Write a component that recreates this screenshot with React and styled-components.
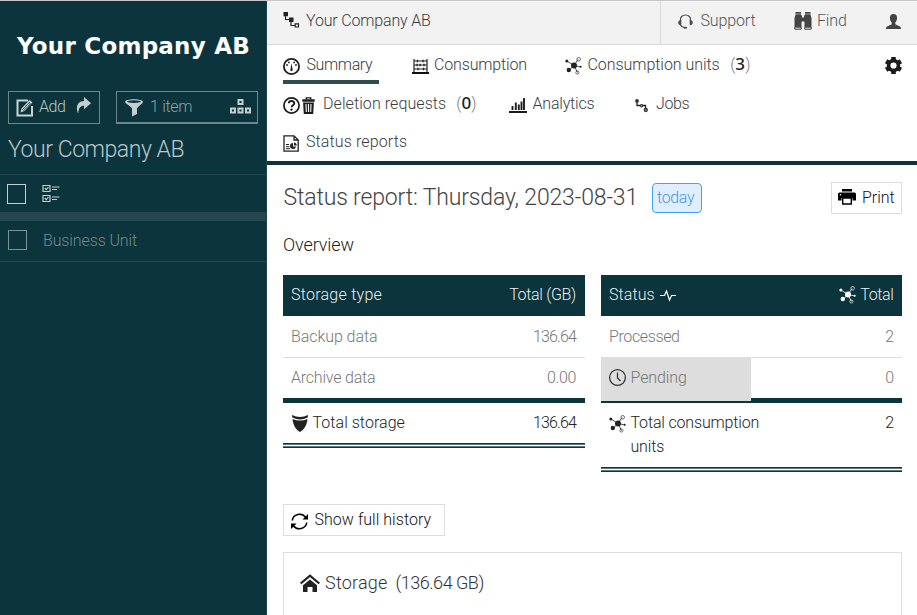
import React from 'react';
import styled, { createGlobalStyle } from 'styled-components';

const deep = '#0c343d';
const rule = '#dddddd';

const Global = createGlobalStyle`
  * { box-sizing: border-box; }
  body { margin: 0; overflow: hidden; background: #fff; font: 300 16px/24px Roboto, "Liberation Sans", sans-serif; color: #222; }
`;

const Page = styled.div`
  display: grid; grid-template-columns: 267px 1fr; height: 615px; width: 917px;
  border-top: 1px solid #c6c6c6; overflow: hidden;
`;

/* Single-line text with its own size, tracking and side margins */
const Text = styled.span`
  display: block; white-space: nowrap;
  font-size: ${p => p.$size || 16}px;
  font-weight: 300;
  letter-spacing: ${p => p.$track || 0}px;
  color: ${p => p.$color || 'inherit'};
  margin: 0 ${p => p.$right || 0}px 0 ${p => p.$left || 0}px;
`;

const Svg = styled.svg`
  display: block; flex: none; overflow: visible;
  margin-top: ${p => p.$top || 0}px;
  margin-left: ${p => p.$left || 0}px;
`;

/* Sidebar */
const Sidebar = styled.aside`background: ${deep}; color: #b9c7ca; border-right: 1px solid #1d434b;`;
const Logo = styled.div`
  padding: 30px 0 0 17px; height: 90px; color: #fff; white-space: nowrap;
  font: 700 23px/30px "DejaVu Sans", sans-serif; letter-spacing: 0.24px;
`;
const Tools = styled.div`display: flex; gap: 16px; padding-left: 8px;`;
const ToolButton = styled.div`
  display: flex; align-items: flex-start; height: 33px; width: ${p => p.$width}px;
  padding: 3px 0 0 7px; border: 1px solid #6d868b; border-bottom-width: ${p => p.$base || 1}px;
`;
const SideTitle = styled.div`height: 50px; padding: 12px 0 0 8px; line-height: 28px;`;
const SideHead = styled.div`
  display: flex; height: 47px; border-top: 1px solid #23454d; border-bottom: 9px solid #24474f;
  padding: 9px 0 0 7px;
`;
const SideRow = styled.div`
  display: flex; height: 41px; border-bottom: 1px solid #23454d; padding: 8px 0 0 8px; color: #6f8b90;
`;
const Check = styled.span`
  width: 19px; height: 20px; border: 1px solid ${p => p.$color}; margin: ${p => p.$top || 0}px ${p => p.$gap}px 0 0;
`;

/* Main column */
const Main = styled.main`min-width: 0;`;
const TopBar = styled.header`
  display: flex; height: 44px; background: #f2f2f2; border-bottom: 1px solid #d9d9d9;
`;
const Crumb = styled.div`display: flex; width: 393px; padding: 8px 0 0 16px; color: #3c3c3c;`;
const TopActions = styled.div`
  display: flex; flex: 1; border-left: 1px solid #d9d9d9; padding: 8px 0 0 17px; color: #555;
`;
const TopAction = styled.div`display: flex; width: ${p => p.$width}px;`;
const Nav = styled.nav`height: 120px; border-bottom: 4px solid ${deep}; padding: 8px 0 0 16px; color: #3c3c3c;`;
const NavRow = styled.div`display: flex; height: ${p => p.$height}px;`;
const NavItem = styled.div`
  display: flex; height: 31px; width: ${p => p.$width}px; margin-right: ${p => p.$gap || 0}px;
  border-bottom: 4px solid ${p => (p.$active ? '#2f4f4f' : 'transparent')};
`;
const Count = styled.span`
  display: flex; color: #777; margin-left: ${p => p.$left}px;
  b { font: 500 17px/22px "Noto Sans", sans-serif; color: #222; width: 10px; text-align: center; margin-left: -1px; }
  i { font-style: normal; width: 6px; }
`;

const Body = styled.section`padding: 17px 15px 0 16px;`;
const Heading = styled.div`display: flex; height: 32px; color: #444;`;
const Today = styled.span`
  width: 50px; height: 30px; margin: 1px 0 0 auto; padding: 2px 0 0 4px; line-height: 24px;
  border: 1px solid #42a1f7; border-radius: 4px; background: #e0efff; color: #4f96db;
`;
const TitleGroup = styled.div`display: flex; width: 419px; line-height: 32px;`;
const BoxButton = styled.div`
  display: flex; width: ${p => p.$width}px; height: 32px; border: 1px solid ${rule}; padding: 3px 0 0 6px;
  color: #111; margin-left: ${p => (p.$end ? 'auto' : 0)};
`;
const Overview = styled.div`margin-top: 18px; height: 43px; line-height: 26px; color: #222;`;
const Tables = styled.div`display: grid; grid-template-columns: 302px 301px; gap: 16px; height: 229px; align-items: start;`;
const Table = styled.div`display: flex; flex-direction: column;`;
const Row = styled.div`
  display: flex; justify-content: space-between; padding: 8px 8px 0; height: 41px; color: #777;
`;
const HeadRow = styled(Row)`background: ${deep}; color: #e9eeef;`;
const LineRow = styled(Row)`height: 42px; border-bottom: 1px solid ${rule}; padding-top: 9px;`;
const LastRow = styled(Row)`height: 45px; border-bottom: 5px solid ${deep};`;
const PendingRow = styled(LastRow)`padding-left: 0; padding-top: 0;`;
const PendingCell = styled.div`
  display: flex; width: 150px; height: 44px; margin-top: -1px; padding: 9px 0 0 8px; background: #ddd;
`;
const PendingValue = styled.div`padding-top: 8px;`;
const TotalRow = styled(Row)`height: ${p => p.$height}px; color: #222;`;
const DoubleRule = styled.div`
  height: 5px; border: solid ${deep}; border-width: 1px 0; padding: 1px 0; background: #5f7b81;
  &::after { content: ''; display: block; height: 1px; background: #fff; }
`;
const Group = styled.div`display: flex;`;
const Card = styled.div`
  display: flex; margin-top: 16px; height: 90px; border: 1px solid ${rule}; padding: 17px 0 0 16px; color: #333; line-height: 26px;
`;

const Network = ({ c = '#222', ...p }) => (
  <Svg width="17" height="18" viewBox="0 0 17 18" fill={c} {...p}>
    <path d="M2 4l7 4.500L4 13.500M9 8.500l4-6M9 8.500l7 1.500M9 8.500l3.500 7" fill="none" stroke={c} strokeWidth=".8" />
    <circle cx="9" cy="8.500" r="3" /><circle cx="3.800" cy="13" r="2.200" /><circle cx="1.800" cy="4" r="1.500" />
    <circle cx="15.700" cy="9.700" r="1" />
    <g fill="none" stroke={c} strokeWidth=".9" opacity=".75"><circle cx="13.700" cy="2.300" r="1.800" /><circle cx="12.400" cy="15.500" r="1.600" /></g>
  </Svg>
);
const Tree = p => (
  <Svg width="17" height="16" viewBox="0 0 17 16" {...p}>
    <path d="M2.500 3v4.500H8M8 8v5.500h4" fill="none" stroke="#222" strokeWidth="1.200" />
    <path d="M.5 0h4.500v4.200H.5zM6 5.500h4.500v4.500H6z" fill="#222" />
    <path d="M12.200 11.800h3.300v3.200h-3.300z" fill="none" stroke="#222" strokeWidth="1.200" />
  </Svg>
);
const Edit = () => (
  <Svg width="18" height="18" viewBox="0 0 18 18" $top={4}>
    <path d="M12 1.500H1.500v15h14.500V7" fill="none" stroke="#c9d3d5" strokeWidth="2" />
    <path d="M4.500 13.500l1-4L13.500 1l3 2.500-8 8.500z" fill="#c9d3d5" />
    <path d="M6.500 10.800l7-7.500M13 3.500l1.500 1.200-7 7.200" fill="none" stroke={deep} strokeWidth=".8" />
  </Svg>
);
const Forward = () => (
  <Svg width="15" height="17" viewBox="0 0 15 17" $top={2} $left={11}>
    <path d="M8 0l7 6.300-7 6V8.800C4.500 8.800 2.500 11 2.300 16.500.5 13-.8 4.500 8 4z" fill="#c4ced0" />
  </Svg>
);
const Funnel = () => (
  <Svg width="18" height="18" viewBox="0 0 18 18" $top={4} $left={1}>
    <path d="M0 3C0-.8 18-.8 18 3c0 1.200-6 5.500-6 6.500V15l-5 2.500v-8C7 8.500 0 4.200 0 3z" fill="#c4ced0" />
    <ellipse cx="9" cy="2.600" rx="7" ry="1.300" fill={deep} />
  </Svg>
);
const Boxes = () => (
  <Svg width="21" height="15" viewBox="0 0 21 15" $top={4} $left={37}>
    <g fill="none" stroke="#c4ced0" strokeWidth="2">
      <path d="M8.500 1h4v4h-4zM1 9.500h4v4H1zM8.500 9.500h4v4h-4zM16 9.500h4v4h-4z" />
    </g>
  </Svg>
);
const Checklist = () => (
  <Svg width="18" height="18" viewBox="0 0 18 18" $left={0.5}>
    <g fill="none" stroke="#c4ced0" strokeWidth="1.200">
      <path d="M1 1.500h7v6H1zM1 11.500h7v6H1z" /><path d="M2.700 4l1.500 1.700L6.500 3.200M2.700 14l1.500 1.700 2.300-2.500" />
      <path d="M10 3h7.500M10 5.500h5M10 13h7.500M10 15.500h5" />
    </g>
  </Svg>
);
const Gauge = () => (
  <Svg width="17" height="17" viewBox="0 0 17 17" $top={5}>
    <circle cx="8.500" cy="8.500" r="7.600" fill="none" stroke="#1c1c1c" strokeWidth="1.800" />
    <path d="M8.500 5l1 6.300a1.200 1.200 0 1 1-2 0z" fill="#1c1c1c" />
    <g fill="#1c1c1c"><circle cx="4" cy="7" r=".9" /><circle cx="5.900" cy="4.400" r=".9" /><circle cx="11.100" cy="4.400" r=".9" /><circle cx="13" cy="7" r=".9" /></g>
  </Svg>
);
const Abacus = () => (
  <Svg width="17" height="15" viewBox="0 0 17 15" $top={6}>
    <path d="M2 0v13.500M15 0v13.500M2 2h13M2 6h13M2 10h13" stroke="#222" strokeWidth="1.200" />
    <path d="M0 14h17" stroke="#111" strokeWidth="2" />
    <path d="M5.500 .7v2.600M11 .7v2.600M5 4.700v2.600M8 4.700v2.600M12 4.700v2.600M6 8.700v2.600M11.500 8.700v2.600" stroke="#222" strokeWidth="1.300" />
  </Svg>
);
const Question = () => (
  <Svg width="17" height="17" viewBox="0 0 17 17" $top={5}>
    <circle cx="8.500" cy="8.500" r="7.600" fill="none" stroke="#1c1c1c" strokeWidth="1.700" />
    <path d="M5.800 6.200C6 3.300 11.500 3.300 11.300 6.400c-.1 1.800-2.600 1.900-2.700 3.800" fill="none" stroke="#1c1c1c" strokeWidth="1.900" />
    <circle cx="8.500" cy="12.600" r="1.200" fill="#1c1c1c" />
  </Svg>
);
const Trash = () => (
  <Svg width="13" height="17" viewBox="0 0 13 17" $top={5} $left={2}>
    <path d="M4.200 2.500V.8h4.600v1.700" fill="none" stroke="#1c1c1c" strokeWidth="1.300" />
    <path d="M.3 2.300h12.400v2.400H.3zM1.100 5.600h10.800L11.200 17H1.800z" fill="#1c1c1c" />
    <path d="M4 7l.3 8M6.500 7v8M9 7l-.3 8" stroke="#fff" strokeWidth="1.100" />
  </Svg>
);
const Bars = () => (
  <Svg width="18" height="15" viewBox="0 0 18 15" $top={6}>
    <path d="M0 14h18" stroke="#1c1c1c" strokeWidth="2" />
    <path d="M3.500 8v4M6.800 4.500V12M9.800 6.500V12M12.500 3.500V12M15 0v12" stroke="#1c1c1c" strokeWidth="1.900" />
  </Svg>
);
const JobsIcon = () => (
  <Svg width="13" height="13" viewBox="0 0 13 13" $top={7}>
    <path d="M2 2v4.500h5.500M6.500 6.500h4V10" fill="none" stroke="#222" strokeWidth="1.300" />
    <circle cx="2" cy="1.900" r="1.900" fill="#333" /><circle cx="6.600" cy="6.700" r="1.700" fill="#333" /><circle cx="6.600" cy="6.700" r=".5" fill="#fff" />
    <circle cx="10.800" cy="11" r="1.500" fill="#999" stroke="#333" strokeWidth="1.300" />
  </Svg>
);
const Doc = () => (
  <Svg width="16" height="17" viewBox="0 0 16 17" $top={5}>
    <path d="M1 .8h10l4.200 4.200v11.200H1z M11 .8v4.200h4.200" fill="none" stroke="#222" strokeWidth="1.300" />
    <path d="M3 9.500h3M3 11.700h3.500M3 13.800h4" stroke="#222" strokeWidth="1.100" />
    <path d="M10 8a3 3 0 1 0 3 3.500h-3z" fill="#222" /><path d="M11 7.500v3h2.700a3 3 0 0 0-2.700-3z" fill="#222" />
  </Svg>
);
const Gear = () => (
  <Svg width="17" height="17" viewBox="0 0 17 17" $top={4}>
    <path d="M8.500 0v17M1.100 4.250l14.800 8.500M1.100 12.750l14.800-8.500" stroke="#1c1c1c" strokeWidth="4.600" />
    <circle cx="8.500" cy="8.500" r="6.700" fill="#1c1c1c" /><circle cx="8.500" cy="8.500" r="3.100" fill="#fff" />
  </Svg>
);
const Headset = () => (
  <Svg width="15" height="15" viewBox="0 0 15 15" $top={5}>
    <path d="M2.500 7C.8-1 14.200-1 12.500 7M2 10.500c1 2 2.500 2.800 4.500 3" fill="none" stroke="#4a4a4a" strokeWidth="1.200" />
    <path d="M3.300 5.800v5.500C-.8 11.500-.8 6 3.300 5.800zM11.700 5.800v5.500c4.100.2 4.100-5.300 0-5.500z" fill="#4a4a4a" /><ellipse cx="7.300" cy="13.700" rx="1.900" ry="1" fill="#4a4a4a" />
  </Svg>
);
const Binoculars = () => (
  <Svg width="18" height="18" viewBox="0 0 18 18" $top={3}>
    <path d="M1.500 0H7v2.500L8 4v1.500h2V4l1-1.500V0h5.500v3l1 3v9h-7V9.500h-3V15H.5V6l1-3z" fill="#444" />
    <path d="M.8 15.200h6.500v2H.8zM10.700 15.200h6.500v2h-6.500z" fill="#ddd" stroke="#444" strokeWidth="1" />
    <path d="M1.500 2h5.500M11 2h5.500" stroke="#ddd" strokeWidth=".6" />
  </Svg>
);
const User = () => (
  <Svg width="15" height="15" viewBox="0 0 15 15" $top={5}>
    <path d="M7.500 0c5 0 4 6.500 1.800 8.500v1.700L14 12.600q1 .8 1 2.400H0q0-1.600 1-2.400l4.700-2.400V8.500C3.500 6.500 2.500 0 7.500 0z" fill="#444" />
  </Svg>
);
const Printer = () => (
  <Svg width="18" height="16" viewBox="0 0 18 16" $top={3}>
    <path d="M4 0h10v2.500H4zM1.500 3.500h15q1.500 0 1.500 1.500v6.500h-3.500V9h-11v2.500H0V5q0-1.500 1.500-1.500z" />
    <path d="M4.700 9h8.600v6H4.700z" fill="#fff" stroke="#000" strokeWidth="1.400" /><circle cx="2.500" cy="5.800" r=".8" fill="#fff" />
  </Svg>
);
const Pulse = () => (
  <Svg width="16" height="11" viewBox="0 0 16 11" $top={7} $left={5}>
    <path d="M0 5.500h4.500L6.500 1l3 9 2-4.500H16" fill="none" stroke="#fff" strokeWidth="1.200" />
  </Svg>
);
const Shield = () => (
  <Svg width="16" height="17" viewBox="0 0 16 17" $top={4} $left={1}>
    <path d="M0 0q8 4 16 0l-.3 2.600q-7.700 3.700-15.400 0zM.5 4q7.500 3 15 0C15 10 12 15 8 17 4 15 1 10 .5 4z" fill="#222" />
  </Svg>
);
const Clock = () => (
  <Svg width="17" height="17" viewBox="0 0 17 17" $top={3}>
    <g fill="none" stroke="#333" strokeWidth="1.300"><circle cx="8.500" cy="8.500" r="7.900" /><path d="M8.500 3.500v5.500l3 3" /></g>
  </Svg>
);
const Refresh = () => (
  <Svg width="17" height="17" viewBox="0 0 17 17" $top={5} $left={1}>
    <path d="M1.300 7.500C2 1 11-.8 14.500 4.300M15.700 9.500C15 16 6 17.800 2.500 12.700" fill="none" stroke="#000" strokeWidth="1.600" />
    <path d="M17 1v5.500h-5.500zM0 16v-5.500h5.500z" />
  </Svg>
);
const Home = () => (
  <Svg width="20" height="18" viewBox="0 0 20 18" $top={4}>
    <path d="M.7 9.500L10 1.600l9.300 7.900" fill="none" stroke="#222" strokeWidth="2.200" />
    <path d="M3 11.300l7-5.800 7 5.800V18h-4.500v-5h-5v5H3z" fill="#222" />
  </Svg>
);

export default function App() {
  return (
    <>
      <Global />
      <Page>
        <Sidebar>
          <Logo>Your Company AB</Logo>
          <Tools>
            <ToolButton $width={92}>
              <Edit /><Text $track={-0.45} $left={5}>Add</Text><Forward />
            </ToolButton>
            <ToolButton $width={142} $base={2}>
              <Funnel /><Text $track={-0.3} $left={7} $right={1} $color="#8fa3a7">1 item</Text><Boxes />
            </ToolButton>
          </Tools>
          <SideTitle><Text $size={23} $track={-0.45}>Your Company AB</Text></SideTitle>
          <SideHead><Check $color="#c4ced0" $gap={15} /><Checklist /></SideHead>
          <SideRow><Check $color="#7b9296" $gap={16} $top={1} /><Text $track={-0.12}>Business Unit</Text></SideRow>
        </Sidebar>
        <Main>
          <TopBar>
            <Crumb><Tree $top={3} /><Text $track={-0.17} $left={6}>Your Company AB</Text></Crumb>
            <TopActions>
              <TopAction $width={116}><Headset /><Text $track={-0.13} $left={7.5}>Support</Text></TopAction>
              <TopAction $width={92}><Binoculars /><Text $track={-0.13} $left={5}>Find</Text></TopAction>
              <TopAction $width={15}><User /></TopAction>
            </TopActions>
          </TopBar>
          <Nav>
            <NavRow $height={39}>
              <NavItem $width={96} $gap={33} $active><Gauge /><Text $track={-0.38} $left={6.5}>Summary</Text></NavItem>
              <NavItem $width={153}><Abacus /><Text $track={-0.15} $left={5}>Consumption</Text></NavItem>
              <NavItem $width={320}>
                <Network $top={4} /><Text $track={-0.05} $left={5.5}>Consumption units</Text>
                <Count $left={10.5}><i>(</i><b>3</b><i>)</i></Count>
              </NavItem>
              <NavItem $width={17}><Gear /></NavItem>
            </NavRow>
            <NavRow $height={38}>
              <NavItem $width={226}>
                <Question /><Trash /><Text $track={0.08} $left={8}>Deletion requests</Text>
                <Count $left={10}><i>(</i><b>0</b><i>)</i></Count>
              </NavItem>
              <NavItem $width={126}><Bars /><Text $track={-0.2} $left={5.5}>Analytics</Text></NavItem>
              <NavItem $width={60}><JobsIcon /><Text $track={-0.39} $left={8}>Jobs</Text></NavItem>
            </NavRow>
            <NavRow $height={31}>
              <NavItem $width={130}><Doc /><Text $track={0.12} $left={7}>Status reports</Text></NavItem>
            </NavRow>
          </Nav>
          <Body>
            <Heading>
              <TitleGroup>
                <Text as="h1" $size={23} $track={-0.15} $left={0.5}>Status report: Thursday, 2023-08-31</Text>
                <Today><Text $track={-0.33}>today</Text></Today>
              </TitleGroup>
              <BoxButton $width={71} $end><Printer /><Text $track={-0.03} $left={6}>Print</Text></BoxButton>
            </Heading>
            <Overview><Text $size={18} $track={-0.11}>Overview</Text></Overview>
            <Tables>
              <Table>
                <HeadRow><Text $track={0.25}>Storage type</Text><Text $track={-0.32} $right={1}>Total (GB)</Text></HeadRow>
                <LineRow><Text $track={-0.07}>Backup data</Text><Text $track={-0.85} $right={1}>136.64</Text></LineRow>
                <LastRow><Text $track={-0.21}>Archive data</Text><Text $track={-0.36} $right={1}>0.00</Text></LastRow>
                <TotalRow $height={40}>
                  <Group><Shield /><Text $track={0.04} $left={4.5}>Total storage</Text></Group>
                  <Text $track={-0.85} $right={1}>136.64</Text>
                </TotalRow>
                <DoubleRule />
              </Table>
              <Table>
                <HeadRow>
                  <Group><Text $track={0.07}>Status</Text><Pulse /></Group>
                  <Group><Network c="#fff" $top={3} /><Text $track={-0.37} $left={4.5} $right={0.5}>Total</Text></Group>
                </HeadRow>
                <LineRow><Text $track={-0.38}>Processed</Text><Text>2</Text></LineRow>
                <PendingRow>
                  <PendingCell><Clock /><Text $track={-0.1} $left={4.5}>Pending</Text></PendingCell>
                  <PendingValue><Text>0</Text></PendingValue>
                </PendingRow>
                <TotalRow $height={64}>
                  <Group><Network $top={4} /><Text $track={-0.17} $left={4.5}>Total consumption<br />units</Text></Group>
                  <Text>2</Text>
                </TotalRow>
                <DoubleRule />
              </Table>
            </Tables>
            <BoxButton $width={162}><Refresh /><Text $track={0.04} $left={6.5}>Show full history</Text></BoxButton>
            <Card>
              <Home /><Text $size={18} $track={0.21} $left={5}>Storage</Text><Text $size={18} $track={-0.48} $left={8}>(136.64 GB)</Text>
            </Card>
          </Body>
        </Main>
      </Page>
    </>
  );
}
